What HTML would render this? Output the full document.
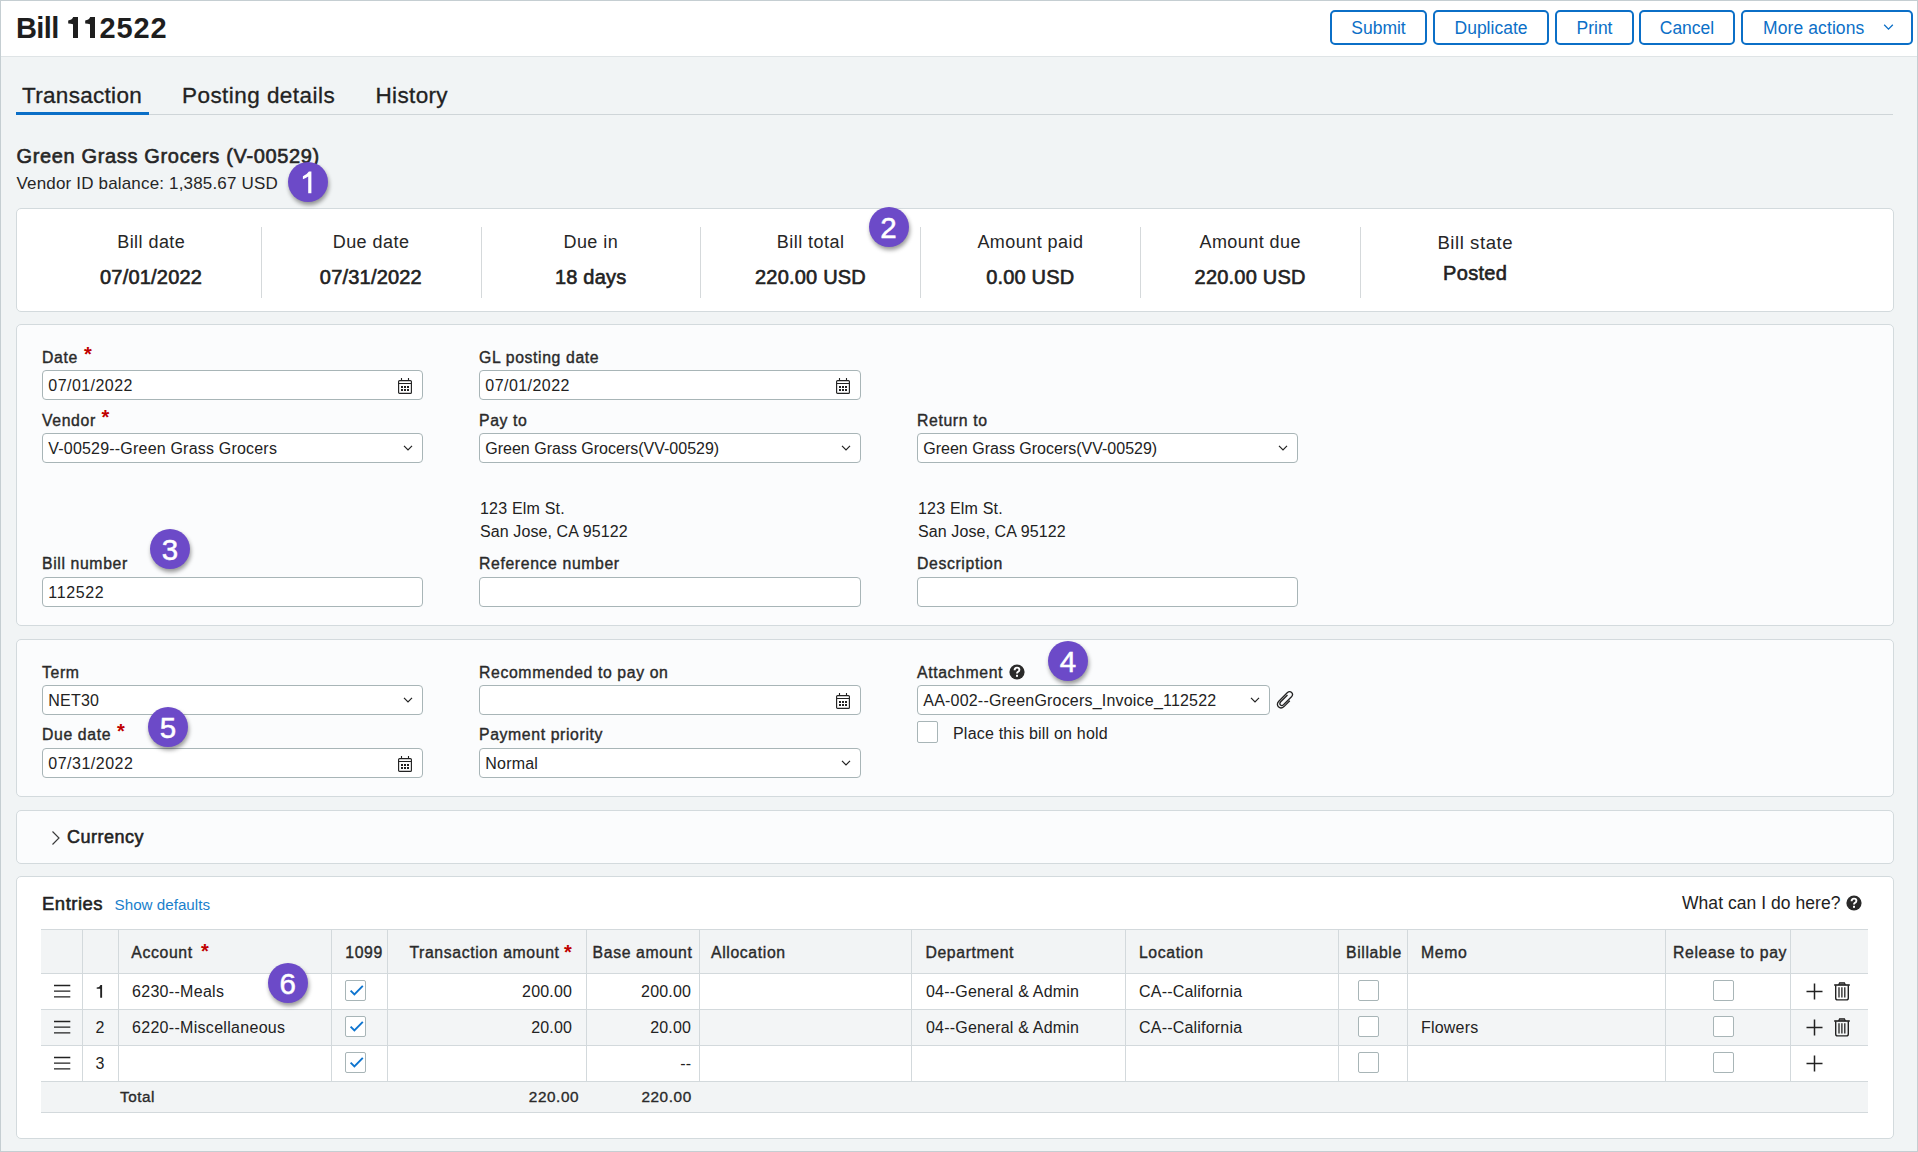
<!DOCTYPE html>
<html><head><meta charset="utf-8"><style>
*{box-sizing:border-box;margin:0;padding:0}
html,body{width:1918px;height:1152px;overflow:hidden}
body{position:relative;background:#f1f4f5;font-family:"Liberation Sans",sans-serif;color:#222}
.t{position:absolute;white-space:nowrap}
.r{position:absolute}
.card{background:#fbfcfd;border:1px solid #d3dadd;border-radius:5px}
.inp{background:#fff;border:1px solid #a8b5b7;border-radius:4px}
.btn{border:2px solid #0b6fc7;border-radius:5px;background:#fff}
.badge{position:absolute;width:40px;height:40px;border-radius:50%;background:#6c4ac8;box-shadow:1px 3px 4px rgba(0,0,0,.4);color:#fff;font-size:29.5px;line-height:41px;text-align:center;-webkit-text-stroke:0.5px #fff}
.cb{position:absolute;width:21px;height:21px;border:1px solid #a8b5b7;border-radius:2px;background:#fff}
</style></head>
<body>
<div class="r " style="left:0px;top:0px;width:1918px;height:1152px;border:1px solid #c5ced2;"></div>
<div class="r " style="left:1px;top:1px;width:1916px;height:56px;background:#fff;border-bottom:1px solid #dfe4e6;"></div>
<div class="t" style="left:16px;top:13.95px;font-size:29px;line-height:29px;color:#1e1e1e;font-weight:bold;letter-spacing:-0.6px;">Bill</div>
<svg class="r" style="left:68.2px;top:17px" width="11" height="21" viewBox="0 0 11 21"><path d="M10 0 V21 H5 V7.2 Q3.2 7 0.2 6.6 V3.4 Q3.8 3.2 5.2 0 Z" fill="#1e1e1e"/></svg>
<svg class="r" style="left:84.7px;top:17px" width="11" height="21" viewBox="0 0 11 21"><path d="M10 0 V21 H5 V7.2 Q3.2 7 0.2 6.6 V3.4 Q3.8 3.2 5.2 0 Z" fill="#1e1e1e"/></svg>
<div class="t" style="left:99.5px;top:13.95px;font-size:29px;line-height:29px;color:#1e1e1e;font-weight:bold;letter-spacing:0.9px;">2522</div>
<div class="r btn" style="left:1330px;top:10px;width:97px;height:35px;"></div>
<div class="t" style="left:1330.0px;width:97px;text-align:center;top:19.69px;font-size:17.5px;line-height:17.5px;color:#0b6fc7;">Submit</div>
<div class="r btn" style="left:1433px;top:10px;width:116px;height:35px;"></div>
<div class="t" style="left:1433.0px;width:116px;text-align:center;top:19.69px;font-size:17.5px;line-height:17.5px;color:#0b6fc7;">Duplicate</div>
<div class="r btn" style="left:1555px;top:10px;width:79px;height:35px;"></div>
<div class="t" style="left:1555.0px;width:79px;text-align:center;top:19.69px;font-size:17.5px;line-height:17.5px;color:#0b6fc7;">Print</div>
<div class="r btn" style="left:1639px;top:10px;width:96px;height:35px;"></div>
<div class="t" style="left:1639.0px;width:96px;text-align:center;top:19.69px;font-size:17.5px;line-height:17.5px;color:#0b6fc7;">Cancel</div>
<div class="r btn" style="left:1741px;top:10px;width:172px;height:35px;"></div>
<div class="t" style="left:1763px;top:19.69px;font-size:17.5px;line-height:17.5px;color:#0b6fc7;letter-spacing:0.1px;">More actions</div>
<svg class="r" style="left:1883px;top:22px" width="12" height="10" viewBox="0 0 12 10"><path d="M1.2 2.8 L5.5 7.1 L9.8 2.8" fill="none" stroke="#0b6fc7" stroke-width="1.3"/></svg>
<div class="r " style="left:16px;top:114px;width:1877px;height:1px;background:#cfd5d8;"></div>
<div class="r " style="left:16px;top:112px;width:133px;height:3px;background:#0b6fc7;"></div>
<div class="t" style="left:22px;top:85.45px;font-size:22.5px;line-height:22.5px;color:#222;letter-spacing:0.3px;-webkit-text-stroke:0.3px #222;">Transaction</div>
<div class="t" style="left:182px;top:85.45px;font-size:22.5px;line-height:22.5px;color:#222;letter-spacing:0.45px;-webkit-text-stroke:0.3px #222;">Posting details</div>
<div class="t" style="left:375.5px;top:85.45px;font-size:22.5px;line-height:22.5px;color:#222;letter-spacing:0.35px;-webkit-text-stroke:0.3px #222;">History</div>
<div class="t" style="left:16.5px;top:145.57px;font-size:20px;line-height:20px;color:#262626;letter-spacing:0.65px;-webkit-text-stroke:0.6px #262626;">Green Grass Grocers (V-00529)</div>
<div class="t" style="left:16.5px;top:175.11px;font-size:17px;line-height:17px;color:#262626;letter-spacing:0.17px;">Vendor ID balance: 1,385.67 USD</div>
<div class="r card" style="left:16px;top:208px;width:1878px;height:104px;background:#fff;"></div>
<div class="t" style="left:41.0px;width:220px;text-align:center;top:233.26px;font-size:18px;line-height:18px;color:#262626;letter-spacing:0.45px;text-indent:0.45px;">Bill date</div>
<div class="t" style="left:41.0px;width:220px;text-align:center;top:266.57px;font-size:20px;line-height:20px;color:#222;letter-spacing:0.2px;-webkit-text-stroke:0.6px #222;text-indent:0.2px;">07/01/2022</div>
<div class="t" style="left:260.8px;width:220px;text-align:center;top:233.26px;font-size:18px;line-height:18px;color:#262626;letter-spacing:0.45px;text-indent:0.45px;">Due date</div>
<div class="t" style="left:260.8px;width:220px;text-align:center;top:266.57px;font-size:20px;line-height:20px;color:#222;letter-spacing:0.2px;-webkit-text-stroke:0.6px #222;text-indent:0.2px;">07/31/2022</div>
<div class="t" style="left:480.6px;width:220px;text-align:center;top:233.26px;font-size:18px;line-height:18px;color:#262626;letter-spacing:0.45px;text-indent:0.45px;">Due in</div>
<div class="t" style="left:480.6px;width:220px;text-align:center;top:266.57px;font-size:20px;line-height:20px;color:#222;letter-spacing:0.2px;-webkit-text-stroke:0.6px #222;text-indent:0.2px;">18 days</div>
<div class="t" style="left:700.4000000000001px;width:220px;text-align:center;top:233.26px;font-size:18px;line-height:18px;color:#262626;letter-spacing:0.45px;text-indent:0.45px;">Bill total</div>
<div class="t" style="left:700.4000000000001px;width:220px;text-align:center;top:266.57px;font-size:20px;line-height:20px;color:#222;letter-spacing:0.2px;-webkit-text-stroke:0.6px #222;text-indent:0.2px;">220.00 USD</div>
<div class="t" style="left:920.2px;width:220px;text-align:center;top:233.26px;font-size:18px;line-height:18px;color:#262626;letter-spacing:0.45px;text-indent:0.45px;">Amount paid</div>
<div class="t" style="left:920.2px;width:220px;text-align:center;top:266.57px;font-size:20px;line-height:20px;color:#222;letter-spacing:0.2px;-webkit-text-stroke:0.6px #222;text-indent:0.2px;">0.00 USD</div>
<div class="t" style="left:1140.0px;width:220px;text-align:center;top:233.26px;font-size:18px;line-height:18px;color:#262626;letter-spacing:0.45px;text-indent:0.45px;">Amount due</div>
<div class="t" style="left:1140.0px;width:220px;text-align:center;top:266.57px;font-size:20px;line-height:20px;color:#222;letter-spacing:0.2px;-webkit-text-stroke:0.6px #222;text-indent:0.2px;">220.00 USD</div>
<div class="r " style="left:261px;top:227px;width:1px;height:71px;background:#d5d9db;"></div>
<div class="r " style="left:481px;top:227px;width:1px;height:71px;background:#d5d9db;"></div>
<div class="r " style="left:700px;top:227px;width:1px;height:71px;background:#d5d9db;"></div>
<div class="r " style="left:920px;top:227px;width:1px;height:71px;background:#d5d9db;"></div>
<div class="r " style="left:1140px;top:227px;width:1px;height:71px;background:#d5d9db;"></div>
<div class="r " style="left:1360px;top:227px;width:1px;height:71px;background:#d5d9db;"></div>
<div class="t" style="left:1365.0px;width:220px;text-align:center;top:233.76px;font-size:18.6px;line-height:18.6px;color:#262626;letter-spacing:0.55px;text-indent:0.55px;">Bill state</div>
<div class="t" style="left:1365.0px;width:220px;text-align:center;top:262.57px;font-size:20px;line-height:20px;color:#222;letter-spacing:0.3px;-webkit-text-stroke:0.6px #222;text-indent:0.3px;">Posted</div>
<div class="r card" style="left:16px;top:324px;width:1878px;height:302px;"></div>
<div class="t" style="left:42px;top:350.13px;font-size:15.8px;line-height:15.8px;color:#2a2a2a;letter-spacing:0.62px;-webkit-text-stroke:0.38px #2a2a2a;">Date</div>
<div class="t" style="left:84px;top:343.57px;font-size:20px;line-height:20px;color:#c00000;font-weight:bold;">*</div>
<div class="r inp" style="left:42px;top:370px;width:381px;height:30px;"></div>
<div class="t" style="left:48.3px;top:377.96px;font-size:16px;line-height:16px;color:#222;letter-spacing:0.45px;">07/01/2022</div>
<svg class="r" style="left:398px;top:378px" width="14" height="16" viewBox="0 0 14 16"><rect x="0.6" y="2.6" width="12.8" height="12.8" rx="1" fill="none" stroke="#222" stroke-width="1.15"/><path d="M0.6 5.5h12.8M3.5 0v3M10.5 0v3" stroke="#222" stroke-width="1.1"/><g fill="#222"><rect x="3" y="8" width="2" height="2"/><rect x="6" y="8" width="2" height="2"/><rect x="9" y="8" width="2" height="2"/><rect x="3" y="11" width="2" height="2"/><rect x="6" y="11" width="2" height="2"/><rect x="9" y="11" width="2" height="2"/></g></svg>
<div class="t" style="left:479px;top:350.13px;font-size:15.8px;line-height:15.8px;color:#2a2a2a;letter-spacing:0.62px;-webkit-text-stroke:0.38px #2a2a2a;">GL posting date</div>
<div class="r inp" style="left:479px;top:370px;width:382px;height:30px;"></div>
<div class="t" style="left:485.3px;top:377.96px;font-size:16px;line-height:16px;color:#222;letter-spacing:0.45px;">07/01/2022</div>
<svg class="r" style="left:836px;top:378px" width="14" height="16" viewBox="0 0 14 16"><rect x="0.6" y="2.6" width="12.8" height="12.8" rx="1" fill="none" stroke="#222" stroke-width="1.15"/><path d="M0.6 5.5h12.8M3.5 0v3M10.5 0v3" stroke="#222" stroke-width="1.1"/><g fill="#222"><rect x="3" y="8" width="2" height="2"/><rect x="6" y="8" width="2" height="2"/><rect x="9" y="8" width="2" height="2"/><rect x="3" y="11" width="2" height="2"/><rect x="6" y="11" width="2" height="2"/><rect x="9" y="11" width="2" height="2"/></g></svg>
<div class="t" style="left:42px;top:413.13px;font-size:15.8px;line-height:15.8px;color:#2a2a2a;letter-spacing:0.62px;-webkit-text-stroke:0.38px #2a2a2a;">Vendor</div>
<div class="t" style="left:101.5px;top:406.57px;font-size:20px;line-height:20px;color:#c00000;font-weight:bold;">*</div>
<div class="r inp" style="left:42px;top:433px;width:381px;height:30px;"></div>
<div class="t" style="left:48.3px;top:440.96px;font-size:16px;line-height:16px;color:#222;letter-spacing:0.2px;">V-00529--Green Grass Grocers</div>
<svg class="r" style="left:403px;top:445px" width="10" height="7" viewBox="0 0 10 7"><path d="M1 0.9 L5 4.9 L9 0.9" fill="none" stroke="#222" stroke-width="1.2"/></svg>
<div class="t" style="left:479px;top:413.13px;font-size:15.8px;line-height:15.8px;color:#2a2a2a;letter-spacing:0.62px;-webkit-text-stroke:0.38px #2a2a2a;">Pay to</div>
<div class="r inp" style="left:479px;top:433px;width:382px;height:30px;"></div>
<div class="t" style="left:485.3px;top:440.96px;font-size:16px;line-height:16px;color:#222;">Green Grass Grocers(VV-00529)</div>
<svg class="r" style="left:841px;top:445px" width="10" height="7" viewBox="0 0 10 7"><path d="M1 0.9 L5 4.9 L9 0.9" fill="none" stroke="#222" stroke-width="1.2"/></svg>
<div class="t" style="left:917px;top:413.13px;font-size:15.8px;line-height:15.8px;color:#2a2a2a;letter-spacing:0.62px;-webkit-text-stroke:0.38px #2a2a2a;">Return to</div>
<div class="r inp" style="left:917px;top:433px;width:381px;height:30px;"></div>
<div class="t" style="left:923.3px;top:440.96px;font-size:16px;line-height:16px;color:#222;">Green Grass Grocers(VV-00529)</div>
<svg class="r" style="left:1278px;top:445px" width="10" height="7" viewBox="0 0 10 7"><path d="M1 0.9 L5 4.9 L9 0.9" fill="none" stroke="#222" stroke-width="1.2"/></svg>
<div class="t" style="left:480px;top:500.96px;font-size:16px;line-height:16px;color:#222;letter-spacing:0.2px;">123 Elm St.</div>
<div class="t" style="left:480px;top:523.96px;font-size:16px;line-height:16px;color:#222;letter-spacing:0.1px;">San Jose, CA 95122</div>
<div class="t" style="left:918px;top:500.96px;font-size:16px;line-height:16px;color:#222;letter-spacing:0.2px;">123 Elm St.</div>
<div class="t" style="left:918px;top:523.96px;font-size:16px;line-height:16px;color:#222;letter-spacing:0.1px;">San Jose, CA 95122</div>
<div class="t" style="left:42px;top:556.13px;font-size:15.8px;line-height:15.8px;color:#2a2a2a;letter-spacing:0.62px;-webkit-text-stroke:0.38px #2a2a2a;">Bill number</div>
<div class="r inp" style="left:42px;top:577px;width:381px;height:30px;"></div>
<div class="t" style="left:48.3px;top:584.96px;font-size:16px;line-height:16px;color:#222;letter-spacing:0.65px;">112522</div>
<div class="t" style="left:479px;top:556.13px;font-size:15.8px;line-height:15.8px;color:#2a2a2a;letter-spacing:0.62px;-webkit-text-stroke:0.38px #2a2a2a;">Reference number</div>
<div class="r inp" style="left:479px;top:577px;width:382px;height:30px;"></div>
<div class="t" style="left:917px;top:556.13px;font-size:15.8px;line-height:15.8px;color:#2a2a2a;letter-spacing:0.62px;-webkit-text-stroke:0.38px #2a2a2a;">Description</div>
<div class="r inp" style="left:917px;top:577px;width:381px;height:30px;"></div>
<div class="r card" style="left:16px;top:639px;width:1878px;height:158px;"></div>
<div class="t" style="left:42px;top:665.13px;font-size:15.8px;line-height:15.8px;color:#2a2a2a;letter-spacing:0.62px;-webkit-text-stroke:0.38px #2a2a2a;">Term</div>
<div class="r inp" style="left:42px;top:685px;width:381px;height:30px;"></div>
<div class="t" style="left:48.3px;top:692.96px;font-size:16px;line-height:16px;color:#222;letter-spacing:0.2px;">NET30</div>
<svg class="r" style="left:403px;top:697px" width="10" height="7" viewBox="0 0 10 7"><path d="M1 0.9 L5 4.9 L9 0.9" fill="none" stroke="#222" stroke-width="1.2"/></svg>
<div class="t" style="left:479px;top:665.13px;font-size:15.8px;line-height:15.8px;color:#2a2a2a;letter-spacing:0.62px;-webkit-text-stroke:0.38px #2a2a2a;">Recommended to pay on</div>
<div class="r inp" style="left:479px;top:685px;width:382px;height:30px;"></div>
<svg class="r" style="left:836px;top:693px" width="14" height="16" viewBox="0 0 14 16"><rect x="0.6" y="2.6" width="12.8" height="12.8" rx="1" fill="none" stroke="#222" stroke-width="1.15"/><path d="M0.6 5.5h12.8M3.5 0v3M10.5 0v3" stroke="#222" stroke-width="1.1"/><g fill="#222"><rect x="3" y="8" width="2" height="2"/><rect x="6" y="8" width="2" height="2"/><rect x="9" y="8" width="2" height="2"/><rect x="3" y="11" width="2" height="2"/><rect x="6" y="11" width="2" height="2"/><rect x="9" y="11" width="2" height="2"/></g></svg>
<div class="t" style="left:917px;top:665.13px;font-size:15.8px;line-height:15.8px;color:#2a2a2a;letter-spacing:0.62px;-webkit-text-stroke:0.38px #2a2a2a;">Attachment</div>
<div class="r inp" style="left:917px;top:685px;width:353px;height:30px;"></div>
<div class="t" style="left:923.3px;top:692.96px;font-size:16px;line-height:16px;color:#222;letter-spacing:0.2px;">AA-002--GreenGrocers_Invoice_112522</div>
<svg class="r" style="left:1250px;top:697px" width="10" height="7" viewBox="0 0 10 7"><path d="M1 0.9 L5 4.9 L9 0.9" fill="none" stroke="#222" stroke-width="1.2"/></svg>
<div class="t" style="left:42px;top:727.13px;font-size:15.8px;line-height:15.8px;color:#2a2a2a;letter-spacing:0.62px;-webkit-text-stroke:0.38px #2a2a2a;">Due date</div>
<div class="t" style="left:117px;top:720.57px;font-size:20px;line-height:20px;color:#c00000;font-weight:bold;">*</div>
<div class="r inp" style="left:42px;top:748px;width:381px;height:30px;"></div>
<div class="t" style="left:48.3px;top:755.96px;font-size:16px;line-height:16px;color:#222;letter-spacing:0.5px;">07/31/2022</div>
<svg class="r" style="left:398px;top:756px" width="14" height="16" viewBox="0 0 14 16"><rect x="0.6" y="2.6" width="12.8" height="12.8" rx="1" fill="none" stroke="#222" stroke-width="1.15"/><path d="M0.6 5.5h12.8M3.5 0v3M10.5 0v3" stroke="#222" stroke-width="1.1"/><g fill="#222"><rect x="3" y="8" width="2" height="2"/><rect x="6" y="8" width="2" height="2"/><rect x="9" y="8" width="2" height="2"/><rect x="3" y="11" width="2" height="2"/><rect x="6" y="11" width="2" height="2"/><rect x="9" y="11" width="2" height="2"/></g></svg>
<div class="t" style="left:479px;top:727.13px;font-size:15.8px;line-height:15.8px;color:#2a2a2a;letter-spacing:0.62px;-webkit-text-stroke:0.38px #2a2a2a;">Payment priority</div>
<div class="r inp" style="left:479px;top:748px;width:382px;height:30px;"></div>
<div class="t" style="left:485.3px;top:755.96px;font-size:16px;line-height:16px;color:#222;letter-spacing:0.2px;">Normal</div>
<svg class="r" style="left:841px;top:760px" width="10" height="7" viewBox="0 0 10 7"><path d="M1 0.9 L5 4.9 L9 0.9" fill="none" stroke="#222" stroke-width="1.2"/></svg>
<div class="cb" style="left:917px;top:721px;width:21px;height:22px"></div>
<div class="t" style="left:953px;top:725.96px;font-size:16px;line-height:16px;color:#222;letter-spacing:0.2px;">Place this bill on hold</div>
<div class="r card" style="left:16px;top:810px;width:1878px;height:54px;"></div>
<svg class="r" style="left:50px;top:830px" width="12" height="16" viewBox="0 0 12 16"><path d="M2.5 1.5 L9 8 L2.5 14.5" fill="none" stroke="#3a3a3a" stroke-width="1.15"/></svg>
<div class="t" style="left:67px;top:828.26px;font-size:18px;line-height:18px;color:#222;letter-spacing:0.5px;-webkit-text-stroke:0.55px #222;">Currency</div>
<div class="r card" style="left:16px;top:876px;width:1878px;height:263px;background:#fff;"></div>
<div class="t" style="left:42px;top:894.84px;font-size:18.5px;line-height:18.5px;color:#222;letter-spacing:0.5px;-webkit-text-stroke:0.55px #222;">Entries</div>
<div class="t" style="left:114.6px;top:896.63px;font-size:15.2px;line-height:15.2px;color:#1a7fcc;">Show defaults</div>
<div class="t" style="left:1682px;top:894.69px;font-size:17.5px;line-height:17.5px;color:#222;letter-spacing:0.05px;">What can I do here?</div>
<div class="r " style="left:41px;top:929px;width:1827px;height:44px;background:#f2f4f5;"></div>
<div class="r " style="left:41px;top:1009px;width:1827px;height:36px;background:#f3f5f6;"></div>
<div class="r " style="left:41px;top:1081px;width:1827px;height:31px;background:#f2f4f5;"></div>
<div class="r " style="left:41px;top:929px;width:1827px;height:1px;background:#d3d9dc;"></div>
<div class="r " style="left:41px;top:973px;width:1827px;height:1px;background:#d3d9dc;"></div>
<div class="r " style="left:41px;top:1009px;width:1827px;height:1px;background:#d3d9dc;"></div>
<div class="r " style="left:41px;top:1045px;width:1827px;height:1px;background:#d3d9dc;"></div>
<div class="r " style="left:41px;top:1081px;width:1827px;height:1px;background:#d3d9dc;"></div>
<div class="r " style="left:41px;top:1112px;width:1827px;height:1px;background:#d3d9dc;"></div>
<div class="r " style="left:82px;top:929px;width:1px;height:152px;background:#d3d9dc;"></div>
<div class="r " style="left:118px;top:929px;width:1px;height:152px;background:#d3d9dc;"></div>
<div class="r " style="left:331px;top:929px;width:1px;height:152px;background:#d3d9dc;"></div>
<div class="r " style="left:387px;top:929px;width:1px;height:152px;background:#d3d9dc;"></div>
<div class="r " style="left:586px;top:929px;width:1px;height:152px;background:#d3d9dc;"></div>
<div class="r " style="left:699px;top:929px;width:1px;height:152px;background:#d3d9dc;"></div>
<div class="r " style="left:911px;top:929px;width:1px;height:152px;background:#d3d9dc;"></div>
<div class="r " style="left:1125px;top:929px;width:1px;height:152px;background:#d3d9dc;"></div>
<div class="r " style="left:1338px;top:929px;width:1px;height:152px;background:#d3d9dc;"></div>
<div class="r " style="left:1407px;top:929px;width:1px;height:152px;background:#d3d9dc;"></div>
<div class="r " style="left:1665px;top:929px;width:1px;height:152px;background:#d3d9dc;"></div>
<div class="r " style="left:1790px;top:929px;width:1px;height:152px;background:#d3d9dc;"></div>
<div class="t" style="left:131.3px;top:945.13px;font-size:15.8px;line-height:15.8px;color:#2a2a2a;letter-spacing:0.62px;-webkit-text-stroke:0.38px #2a2a2a;">Account</div>
<div class="t" style="left:201px;top:940.57px;font-size:20px;line-height:20px;color:#c00000;font-weight:bold;">*</div>
<div class="t" style="left:345.3px;top:945.13px;font-size:15.8px;line-height:15.8px;color:#2a2a2a;letter-spacing:0.62px;-webkit-text-stroke:0.38px #2a2a2a;">1099</div>
<div class="t" style="left:409.4px;top:945.13px;font-size:15.8px;line-height:15.8px;color:#2a2a2a;letter-spacing:0.62px;-webkit-text-stroke:0.38px #2a2a2a;">Transaction amount</div>
<div class="t" style="left:564px;top:941.57px;font-size:20px;line-height:20px;color:#c00000;font-weight:bold;">*</div>
<div class="t" style="left:592.6px;top:945.13px;font-size:15.8px;line-height:15.8px;color:#2a2a2a;letter-spacing:0.62px;-webkit-text-stroke:0.38px #2a2a2a;">Base amount</div>
<div class="t" style="left:711px;top:945.13px;font-size:15.8px;line-height:15.8px;color:#2a2a2a;letter-spacing:0.62px;-webkit-text-stroke:0.38px #2a2a2a;">Allocation</div>
<div class="t" style="left:925.4px;top:945.13px;font-size:15.8px;line-height:15.8px;color:#2a2a2a;letter-spacing:0.62px;-webkit-text-stroke:0.38px #2a2a2a;">Department</div>
<div class="t" style="left:1138.9px;top:945.13px;font-size:15.8px;line-height:15.8px;color:#2a2a2a;letter-spacing:0.62px;-webkit-text-stroke:0.38px #2a2a2a;">Location</div>
<div class="t" style="left:1346px;top:945.13px;font-size:15.8px;line-height:15.8px;color:#2a2a2a;letter-spacing:0.62px;-webkit-text-stroke:0.38px #2a2a2a;">Billable</div>
<div class="t" style="left:1421px;top:945.13px;font-size:15.8px;line-height:15.8px;color:#2a2a2a;letter-spacing:0.62px;-webkit-text-stroke:0.38px #2a2a2a;">Memo</div>
<div class="t" style="left:1673px;top:945.13px;font-size:15.8px;line-height:15.8px;color:#2a2a2a;letter-spacing:0.62px;-webkit-text-stroke:0.38px #2a2a2a;">Release to pay</div>
<svg class="r" style="left:54px;top:984px" width="17" height="14" viewBox="0 0 17 14"><path d="M0 1.5h16.3M0 7.2h16.3M0 12.9h16.3" stroke="#222" stroke-width="1.3"/></svg>
<svg class="r" style="left:95px;top:984px" width="8" height="14" viewBox="0 0 8 14"><path d="M7.1 1 V13.8 H5.2 V4.7 H1.7 V3.6 Q4.7 3.5 5.5 1 Z" fill="#222"/></svg>
<div class="t" style="left:132px;top:983.96px;font-size:16px;line-height:16px;color:#222;letter-spacing:0.3px;">6230--Meals</div>
<div class="cb" style="left:345px;top:980px"></div>
<svg class="r" style="left:345px;top:980px" width="21" height="21" viewBox="0 0 21 21"><path d="M5.6 10.6 L9.4 14.4 L17.8 5.8" fill="none" stroke="#0d74cf" stroke-width="1.9"/></svg>
<div class="t" style="left:422.2px;width:150px;text-align:right;top:983.96px;font-size:16px;line-height:16px;color:#222;letter-spacing:0.2px;">200.00</div>
<div class="t" style="left:541.2px;width:150px;text-align:right;top:983.96px;font-size:16px;line-height:16px;color:#222;letter-spacing:0.2px;">200.00</div>
<div class="t" style="left:926px;top:983.96px;font-size:16px;line-height:16px;color:#222;letter-spacing:0.2px;">04--General &amp; Admin</div>
<div class="t" style="left:1139px;top:983.96px;font-size:16px;line-height:16px;color:#222;letter-spacing:0.2px;">CA--California</div>
<div class="cb" style="left:1358px;top:980px"></div>
<div class="cb" style="left:1713px;top:980px"></div>
<svg class="r" style="left:1806px;top:983px" width="17" height="17" viewBox="0 0 17 17"><path d="M8.5 0.5v16M0.5 8.5h16" stroke="#222" stroke-width="1.5"/></svg>
<svg class="r" style="left:1834px;top:982px" width="16" height="19" viewBox="0 0 16 19"><path d="M4.6 3 L5.6 0.8 H10.4 L11.4 3" fill="#8a8a8a" stroke="#222" stroke-width="1.2"/><path d="M0.2 3h15.6" stroke="#222" stroke-width="1.6"/><path d="M1.7 3.2 V16 Q1.7 17.9 3.6 17.9 H12.4 Q14.3 17.9 14.3 16 V3.2" fill="none" stroke="#222" stroke-width="1.4"/><path d="M5 5.2v10.2M7.9 5.2v10.2M10.8 5.2v10.2" stroke="#222" stroke-width="1.3"/></svg>
<svg class="r" style="left:54px;top:1020px" width="17" height="14" viewBox="0 0 17 14"><path d="M0 1.5h16.3M0 7.2h16.3M0 12.9h16.3" stroke="#222" stroke-width="1.3"/></svg>
<div class="t" style="left:82.0px;width:36px;text-align:center;top:1019.96px;font-size:16px;line-height:16px;color:#222;">2</div>
<div class="t" style="left:132px;top:1019.96px;font-size:16px;line-height:16px;color:#222;letter-spacing:0.3px;">6220--Miscellaneous</div>
<div class="cb" style="left:345px;top:1016px"></div>
<svg class="r" style="left:345px;top:1016px" width="21" height="21" viewBox="0 0 21 21"><path d="M5.6 10.6 L9.4 14.4 L17.8 5.8" fill="none" stroke="#0d74cf" stroke-width="1.9"/></svg>
<div class="t" style="left:422.2px;width:150px;text-align:right;top:1019.96px;font-size:16px;line-height:16px;color:#222;letter-spacing:0.2px;">20.00</div>
<div class="t" style="left:541.2px;width:150px;text-align:right;top:1019.96px;font-size:16px;line-height:16px;color:#222;letter-spacing:0.2px;">20.00</div>
<div class="t" style="left:926px;top:1019.96px;font-size:16px;line-height:16px;color:#222;letter-spacing:0.2px;">04--General &amp; Admin</div>
<div class="t" style="left:1139px;top:1019.96px;font-size:16px;line-height:16px;color:#222;letter-spacing:0.2px;">CA--California</div>
<div class="cb" style="left:1358px;top:1016px"></div>
<div class="t" style="left:1421px;top:1019.96px;font-size:16px;line-height:16px;color:#222;letter-spacing:0.2px;">Flowers</div>
<div class="cb" style="left:1713px;top:1016px"></div>
<svg class="r" style="left:1806px;top:1019px" width="17" height="17" viewBox="0 0 17 17"><path d="M8.5 0.5v16M0.5 8.5h16" stroke="#222" stroke-width="1.5"/></svg>
<svg class="r" style="left:1834px;top:1018px" width="16" height="19" viewBox="0 0 16 19"><path d="M4.6 3 L5.6 0.8 H10.4 L11.4 3" fill="#8a8a8a" stroke="#222" stroke-width="1.2"/><path d="M0.2 3h15.6" stroke="#222" stroke-width="1.6"/><path d="M1.7 3.2 V16 Q1.7 17.9 3.6 17.9 H12.4 Q14.3 17.9 14.3 16 V3.2" fill="none" stroke="#222" stroke-width="1.4"/><path d="M5 5.2v10.2M7.9 5.2v10.2M10.8 5.2v10.2" stroke="#222" stroke-width="1.3"/></svg>
<svg class="r" style="left:54px;top:1056px" width="17" height="14" viewBox="0 0 17 14"><path d="M0 1.5h16.3M0 7.2h16.3M0 12.9h16.3" stroke="#222" stroke-width="1.3"/></svg>
<div class="t" style="left:82.0px;width:36px;text-align:center;top:1055.96px;font-size:16px;line-height:16px;color:#222;">3</div>
<div class="cb" style="left:345px;top:1052px"></div>
<svg class="r" style="left:345px;top:1052px" width="21" height="21" viewBox="0 0 21 21"><path d="M5.6 10.6 L9.4 14.4 L17.8 5.8" fill="none" stroke="#0d74cf" stroke-width="1.9"/></svg>
<div class="t" style="left:541.2px;width:150px;text-align:right;top:1055.96px;font-size:16px;line-height:16px;color:#222;letter-spacing:0.2px;">--</div>
<div class="cb" style="left:1358px;top:1052px"></div>
<div class="cb" style="left:1713px;top:1052px"></div>
<svg class="r" style="left:1806px;top:1055px" width="17" height="17" viewBox="0 0 17 17"><path d="M8.5 0.5v16M0.5 8.5h16" stroke="#222" stroke-width="1.5"/></svg>
<div class="t" style="left:120px;top:1088.55px;font-size:15.3px;line-height:15.3px;color:#2a2a2a;letter-spacing:0.5px;-webkit-text-stroke:0.35px #2a2a2a;">Total</div>
<div class="t" style="left:429.20000000000005px;width:150px;text-align:right;top:1088.55px;font-size:15.3px;line-height:15.3px;color:#2a2a2a;letter-spacing:0.6px;-webkit-text-stroke:0.35px #2a2a2a;">220.00</div>
<div class="t" style="left:541.8000000000001px;width:150px;text-align:right;top:1088.55px;font-size:15.3px;line-height:15.3px;color:#2a2a2a;letter-spacing:0.6px;-webkit-text-stroke:0.35px #2a2a2a;">220.00</div>
<svg class="r" style="left:1008.7px;top:663.9px" width="16" height="16" viewBox="0 0 16 16"><circle cx="8" cy="8" r="7.6" fill="#2a2a2a"/><path d="M5.6 6.2 Q5.6 3.6 8 3.6 Q10.4 3.6 10.4 5.8 Q10.4 7.2 8.9 7.9 Q8 8.4 8 9.6" fill="none" stroke="#fff" stroke-width="1.9"/><rect x="7" y="10.8" width="2" height="2" fill="#fff"/></svg>
<svg class="r" style="left:1845.6px;top:894.9px" width="16" height="16" viewBox="0 0 16 16"><circle cx="8" cy="8" r="7.6" fill="#2a2a2a"/><path d="M5.6 6.2 Q5.6 3.6 8 3.6 Q10.4 3.6 10.4 5.8 Q10.4 7.2 8.9 7.9 Q8 8.4 8 9.6" fill="none" stroke="#fff" stroke-width="1.9"/><rect x="7" y="10.8" width="2" height="2" fill="#fff"/></svg>
<svg class="r" style="left:1276px;top:690px" width="19" height="20" viewBox="0 0 19 20"><path d="M11.5 5 L4.5 12 Q3.2 13.8 4.5 15 Q5.8 16.2 7.5 14.8 L15.5 6.8 Q17.6 4.4 15.6 2.5 Q13.6 0.6 11.2 2.8 L2.8 11.2 Q0.2 14 2.4 16.8 Q5 19.2 8 16.6 L13.8 10.8" fill="none" stroke="#222" stroke-width="1.3"/></svg>
<div class="badge" style="left:288px;top:162px"><svg style="position:absolute;left:0;top:0" width="40" height="40" viewBox="0 0 40 40"><path d="M23.4 9.6 V31.2 H20.2 V14.6 Q17.9 16.4 14.9 17.2 V14.3 Q18.8 12.9 20.9 9.6 Z" fill="#fff"/></svg></div>
<div class="badge" style="left:868.5px;top:207px">2</div>
<div class="badge" style="left:150px;top:528.5px">3</div>
<div class="badge" style="left:1048px;top:641px">4</div>
<div class="badge" style="left:148px;top:707px">5</div>
<div class="badge" style="left:267.7px;top:963px">6</div>
</body></html>
